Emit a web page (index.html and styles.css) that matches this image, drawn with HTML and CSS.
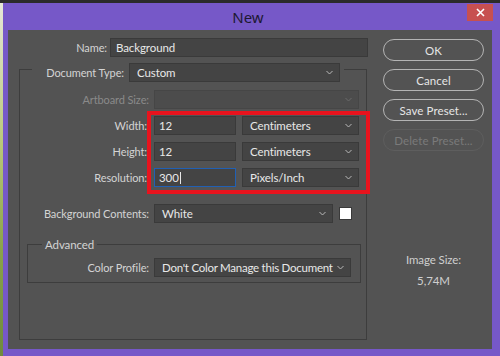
FILE: index.html
```html
<!DOCTYPE html>
<html lang="en">
  <head>
    <meta charset="UTF-8" />
    <title>New</title>
    <link rel="stylesheet" href="styles.css">
  </head>
  <body>
    <div class="screen">
      <div class="wallpaper"></div>
      <div class="window">
        <div class="titlebar">
          <span></span>
          <h1 class="title">New</h1>
          <button class="close">
            <svg width="9" height="9" viewBox="0 0 9 9"><path d="M1 1L8 8M8 1L1 8" stroke="#fff" stroke-width="1.6"/></svg>
          </button>
        </div>

        <div class="dialog">
          <div class="form">
            <div class="row name-row">
              <span class="label name-label">Name:</span>
              <div class="field name-field">Background</div>
            </div>

            <div class="group">
              <div class="group-head">
                <span class="label head-label">Document Type:</span>
                <div class="select doc-select">Custom <svg class="chev" width="7" height="5" viewBox="0 0 7 5"><path d="M0.5 1L3.5 4L6.5 1" fill="none" stroke="#b8b8b8"/></svg></div>
              </div>

              <div class="row">
                <span class="label disabled">Artboard Size:</span>
                <div class="select off wide"><svg class="chev" width="7" height="5" viewBox="0 0 7 5"><path d="M0.5 1L3.5 4L6.5 1" fill="none" stroke="#6a6a6a"/></svg></div>
              </div>
              <div class="row">
                <span class="label marked">Width:</span>
                <div class="field num">12</div>
                <div class="select unit">Centimeters <svg class="chev" width="7" height="5" viewBox="0 0 7 5"><path d="M0.5 1L3.5 4L6.5 1" fill="none" stroke="#b8b8b8"/></svg></div>
              </div>
              <div class="row">
                <span class="label marked">Height:</span>
                <div class="field num">12</div>
                <div class="select unit">Centimeters <svg class="chev" width="7" height="5" viewBox="0 0 7 5"><path d="M0.5 1L3.5 4L6.5 1" fill="none" stroke="#b8b8b8"/></svg></div>
              </div>
              <div class="row">
                <span class="label marked">Resolution:</span>
                <div class="field num focus">300<span class="caret"></span></div>
                <div class="select unit">Pixels/Inch <svg class="chev" width="7" height="5" viewBox="0 0 7 5"><path d="M0.5 1L3.5 4L6.5 1" fill="none" stroke="#b8b8b8"/></svg></div>
              </div>
              <div class="row bg-row">
                <span class="label">Background Contents:</span>
                <div class="select bg-select">White <svg class="chev" width="7" height="5" viewBox="0 0 7 5"><path d="M0.5 1L3.5 4L6.5 1" fill="none" stroke="#b8b8b8"/></svg></div>
                <div class="swatch"></div>
              </div>

              <div class="advanced">
                <div class="advanced-head">Advanced</div>
                <div class="row profile-row">
                  <span class="label profile-label">Color Profile:</span>
                  <div class="select profile-select">Don't Color Manage this Document <svg class="chev" width="7" height="5" viewBox="0 0 7 5"><path d="M0.5 1L3.5 4L6.5 1" fill="none" stroke="#b8b8b8"/></svg></div>
                </div>
              </div>

              <div class="red-mark"></div>
            </div>
          </div>

          <div class="side">
            <button class="pill">OK</button>
            <button class="pill">Cancel</button>
            <button class="pill">Save Preset...</button>
            <button class="pill off">Delete Preset...</button>
            <div class="info">
              <p>Image Size:</p>
              <p class="size">5,74M</p>
            </div>
          </div>
        </div>
      </div>
    </div>
  </body>
</html>
```
FILE: styles.css
```css
* {
  margin: 0;
  padding: 0;
  box-sizing: border-box;
}
body {
  font-family: "Lato", "Noto Sans", sans-serif;
  font-size: 11px;
  letter-spacing: -0.1px;
  background: #2b2b2b;
  width: 500px;
  height: 356px;
  overflow: hidden;
}
.screen {
  display: flex;
  height: 356px;
  padding-top: 3px;
}
.wallpaper {
  width: 3px;
  background: linear-gradient(#e6e8d8, #b9c77a 40%, #8aa24a 70%, #6f8a3e);
}
.window {
  width: 497px;
  display: flex;
  flex-direction: column;
  background: #7658c8;
}

/* title bar */
.titlebar {
  height: 27px;
  display: grid;
  grid-template-columns: 1fr auto 1fr;
  padding: 1px 7px 0 0;
}
.title {
  font-family: "Noto Sans", sans-serif;
  font-size: 15px;
  font-weight: normal;
  letter-spacing: 0;
  color: #1d1833;
  line-height: 26px;
}
.close {
  justify-self: end;
  width: 26px;
  height: 17px;
  border: none;
  background: #c75050;
  display: flex;
  align-items: center;
  justify-content: center;
}

/* dialog body */
.dialog {
  flex: 1;
  margin: 0 8px 7px 5px;
  background: #535353;
  display: flex;
  padding-top: 8px;
}
.form {
  width: 375px;
}
.row {
  display: flex;
  align-items: center;
  column-gap: 5px;
  margin-top: 7px;
}
.label {
  width: 129px;
  text-align: right;
  color: #d4d4d4;
  white-space: nowrap;
}
.label.disabled {
  color: #8a8a8a;
}
.label.marked {
  padding-right: 2px;
}
.name-row {
  margin-top: 0;
  column-gap: 3px;
}
.name-label {
  width: 99px;
}
.field,
.select {
  height: 19px;
  background: #444444;
  border: 1px solid #3a3a3a;
  color: #e8e8e8;
  font-size: 11.5px;
  display: flex;
  align-items: center;
  white-space: nowrap;
}
.field {
  padding-left: 4px;
}
.select {
  justify-content: space-between;
  padding: 0 6px 0 7px;
}
.select.off {
  background: #4c4c4c;
  border-color: #464646;
  justify-content: flex-end;
}
.name-field {
  width: 258px;
  padding-left: 5px;
}

.group {
  position: relative;
  margin: 12px 0 0 11px;
  width: 348px;
  height: 271px;
  border: 1px solid #3d3d3d;
}
.group-head {
  display: flex;
  align-items: center;
  column-gap: 5px;
  width: fit-content;
  margin: -7px 0 0 12px;
  padding-right: 4px;
  background: #535353;
}
.head-label {
  width: 92px;
}
.doc-select {
  width: 211px;
}
.group-head + .row {
  margin-top: 8px;
}
.wide {
  width: 205px;
}
.num {
  width: 82px;
}
.unit {
  width: 117px;
  margin-left: 1px;
}
.focus {
  border-color: #2160b4;
}
.caret {
  width: 1px;
  height: 12px;
  background: #e8e8e8;
  margin-left: 1px;
}
.bg-row {
  margin-top: 17px;
}
.bg-select {
  width: 179px;
}
.swatch {
  width: 13px;
  height: 13px;
  background: #ffffff;
  border: 1px solid #3a3a3a;
  margin-left: 1px;
}

.advanced {
  margin: 21px 0 0 7px;
  width: 334px;
  border: 1px solid #3d3d3d;
  padding-bottom: 5px;
}
.advanced-head {
  width: fit-content;
  margin: -8px 0 0 14px;
  padding: 0 3px;
  line-height: 16px;
  background: #535353;
  color: #d4d4d4;
  font-size: 11.5px;
}
.profile-row {
  margin-top: 5px;
}
.profile-label {
  width: 121px;
}
.profile-select {
  width: 197px;
  letter-spacing: -0.25px;
}

.red-mark {
  position: absolute;
  left: 127px;
  top: 41px;
  width: 223px;
  height: 83px;
  border: 4px solid #e8131d;
}

/* right column */
.side {
  width: 101px;
  padding-top: 1px;
  display: flex;
  flex-direction: column;
  row-gap: 8px;
}
.pill {
  height: 22px;
  border-radius: 11px;
  border: 1.5px solid #b4b4b4;
  background: #535353;
  color: #e6e6e6;
  font-family: inherit;
  font-size: 11.5px;
  letter-spacing: 0.1px;
}
.pill.off {
  border-color: #5e5e5e;
  color: #7a7a7a;
}
.info {
  margin-top: 93px;
  text-align: center;
  color: #cfcfcf;
  font-size: 11.5px;
  line-height: 16px;
  display: flex;
  flex-direction: column;
  row-gap: 5px;
}
```
